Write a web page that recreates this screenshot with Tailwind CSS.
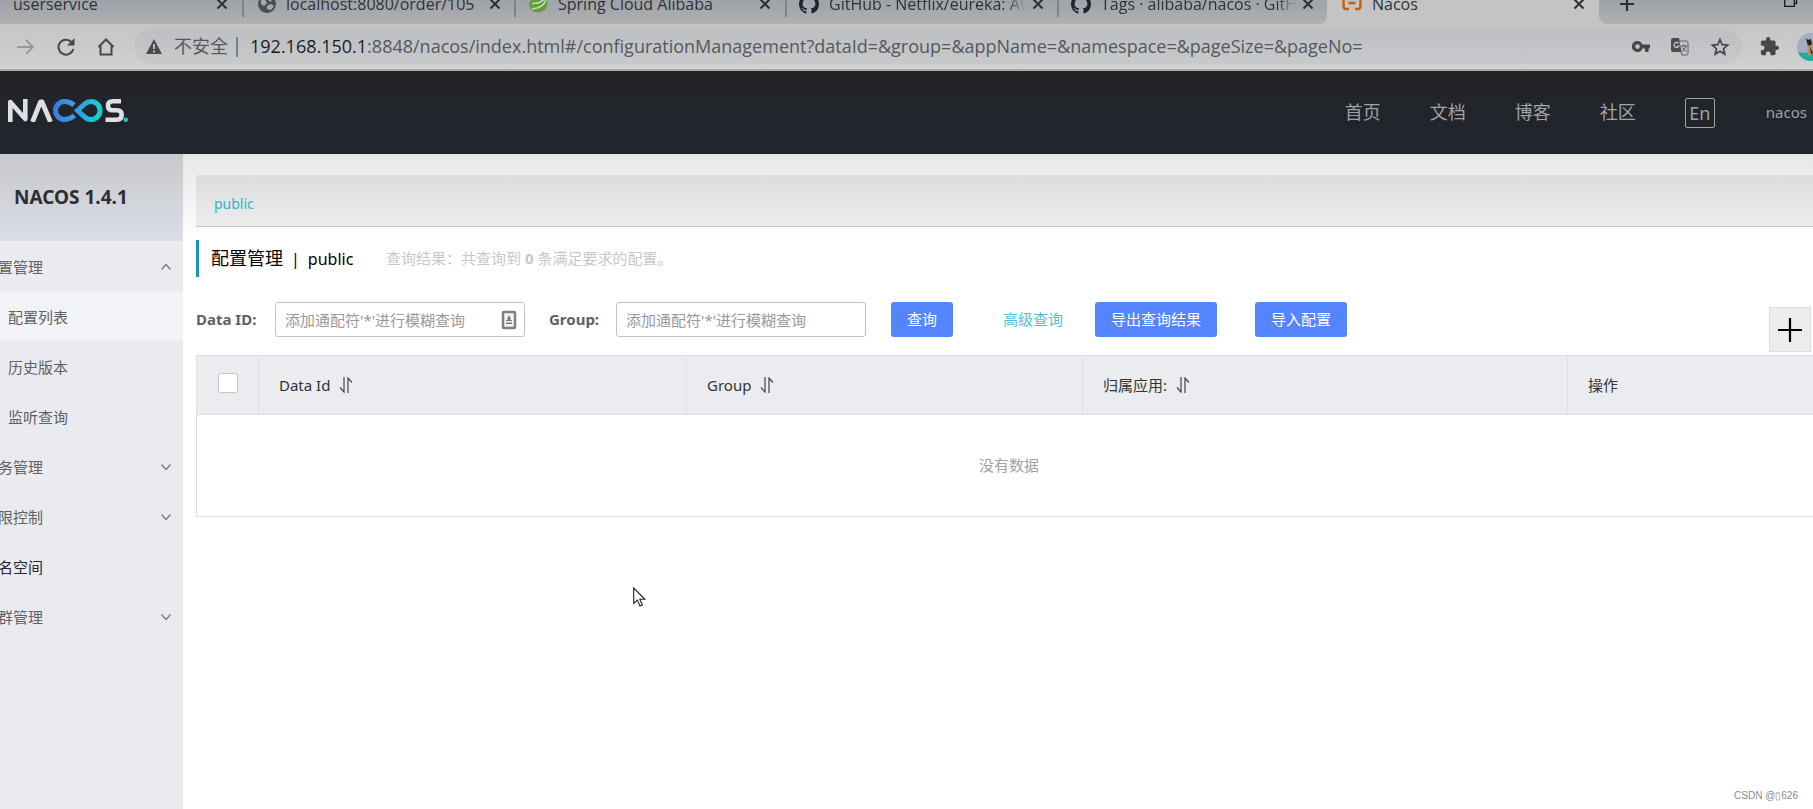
<!DOCTYPE html>
<html lang="zh-CN">
<head>
<meta charset="utf-8">
<title>Nacos</title>
<script src="https://cdn.jsdelivr.net/npm/@tailwindcss/browser@4"></script>
</head>
<body class="min-h-screen flex flex-col overflow-hidden bg-white text-[15px] font-['Noto_Sans','Noto_Sans_CJK_SC',sans-serif]">
<svg class="hidden">
  <symbol id="x" viewBox="0 0 12 12"><path d="M1.5 1.5l9 9M10.5 1.5l-9 9" stroke="#2d3033" stroke-width="2" fill="none"/></symbol>
  <symbol id="github" viewBox="0 0 16 16"><path fill="#1f2530" d="M8 0C3.58 0 0 3.58 0 8c0 3.54 2.29 6.53 5.47 7.59.4.07.55-.17.55-.38 0-.19-.01-.82-.01-1.49-2.01.37-2.53-.49-2.69-.94-.09-.23-.48-.94-.82-1.13-.28-.15-.68-.52-.01-.53.63-.01 1.08.58 1.23.82.72 1.21 1.87.87 2.33.66.07-.52.28-.87.51-1.07-1.78-.2-3.64-.89-3.64-3.95 0-.87.31-1.59.82-2.15-.08-.2-.36-1.02.08-2.12 0 0 .67-.21 2.2.82a7.6 7.6 0 0 1 4 0c1.53-1.04 2.2-.82 2.2-.82.44 1.1.16 1.92.08 2.12.51.56.82 1.27.82 2.15 0 3.07-1.87 3.75-3.65 3.95.29.25.54.73.54 1.48 0 1.07-.01 1.93-.01 2.2 0 .21.15.46.55.38A8.01 8.01 0 0 0 16 8c0-4.42-3.58-8-8-8z"/></symbol>
  <symbol id="sort" viewBox="0 0 14 16"><path d="M5 0v15L1 10.500M9 16V1l4 4.500" stroke="#444" stroke-width="1.200" fill="none"/></symbol>
  <symbol id="down" viewBox="0 0 12 8"><path d="M1.500 1.500l4.500 5 4.500-5" stroke="#777" stroke-width="1.200" fill="none"/></symbol>
</svg>

<!-- Browser tabs -->
<div class="h-6 shrink-0 flex bg-[#c4c4c3] text-[16px] text-[#2f3235] font-['Open_Sans',sans-serif]">
  <div class="h-6 shrink-0 overflow-hidden flex items-end rounded-br-lg bg-linear-to-b from-[#9ea3a7] to-[#aeb0b4]">
    <div class="h-10 w-[242px] shrink-0 flex items-center pl-[13px] pr-[14px]">
      <span class="flex-1">userservice</span>
      <button aria-label="关闭"><svg class="size-3"><use href="#x"/></svg></button>
    </div>
    <div class="h-10 w-[272px] shrink-0 flex items-center gap-[10px] pl-[14px] pr-[13px] border-l-2 border-[#7f8387] [border-image:linear-gradient(#7f8387_80%,transparent_80%)_1]">
      <svg class="size-[18px] shrink-0" viewBox="0 0 18 18"><circle cx="9" cy="9" r="9" fill="#4a4e52"/><path d="M3 4l4 1 2 3-3 3-3-2zM10 2l4 2-1 3-3-2zM9 11l4-2 3 2-3 4-4-1z" fill="#a6aaae"/></svg>
      <span class="flex-1 min-w-0 overflow-hidden whitespace-nowrap">localhost:8080/order/105</span>
      <button aria-label="关闭"><svg class="size-3"><use href="#x"/></svg></button>
    </div>
    <div class="h-10 w-[271px] shrink-0 flex items-center gap-[10px] pl-[12px] pr-[14px] border-l-2 border-[#7f8387] [border-image:linear-gradient(#7f8387_80%,transparent_80%)_1]">
      <svg class="size-5 shrink-0" viewBox="0 0 20 20"><path d="M18 1c2 7 2 12-2 15.500-4 3-10 2.500-13-1C-1 10 2 5 8 5c4 0 8-1 10-4z" fill="#5f9e35"/><path d="M18 5c-1 6-6 9-14 10M4 9.500C9 10 14 8 17 4" stroke="#c9d9bd" stroke-width="1.500" fill="none"/></svg>
      <span class="flex-1 min-w-0 overflow-hidden whitespace-nowrap">Spring Cloud Alibaba</span>
      <button aria-label="关闭"><svg class="size-3"><use href="#x"/></svg></button>
    </div>
    <div class="h-10 w-[272px] shrink-0 flex items-center gap-[10px] pl-[12px] pr-[13px] border-l-2 border-[#7f8387] [border-image:linear-gradient(#7f8387_80%,transparent_80%)_1]">
      <svg class="size-5 shrink-0"><use href="#github"/></svg>
      <span class="flex-1 min-w-0 -mr-1 overflow-hidden whitespace-nowrap mask-r-from-90%">GitHub - Netflix/eureka: AWS</span>
      <button aria-label="关闭"><svg class="size-3"><use href="#x"/></svg></button>
    </div>
    <div class="h-10 w-[270px] shrink-0 flex items-center gap-[10px] pl-[12px] pr-[13px] border-l-2 border-[#7f8387] [border-image:linear-gradient(#7f8387_80%,transparent_80%)_1]">
      <svg class="size-5 shrink-0"><use href="#github"/></svg>
      <span class="flex-1 min-w-0 -mr-1 overflow-hidden whitespace-nowrap mask-r-from-90%">Tags · alibaba/nacos · GitHub</span>
      <button aria-label="关闭"><svg class="size-3"><use href="#x"/></svg></button>
    </div>
  </div>
  <div class="h-6 w-[272px] shrink-0 overflow-hidden flex items-end">
    <div class="h-10 flex-1 flex items-center gap-[10px] pl-[15px] pr-[14px]">
      <svg class="size-5 shrink-0" viewBox="0 0 20 20"><path d="M7 3H4Q1.500 3 1.500 6v6q0 3 2.500 3h3M13 3h3q2.500 0 2.500 3v6q0 3-2.500 3h-3M6.500 9h7" stroke="#c8600f" stroke-width="2.400" fill="none"/></svg>
      <span class="flex-1">Nacos</span>
      <button aria-label="关闭"><svg class="size-3"><use href="#x"/></svg></button>
    </div>
  </div>
  <div class="h-6 flex-1 overflow-hidden flex items-end rounded-bl-lg bg-linear-to-b from-[#9ea3a7] to-[#aeb0b4]">
    <div class="h-10 flex-1 flex items-center justify-between pl-5 pr-[15px]">
      <button aria-label="新标签页"><svg class="size-4" viewBox="0 0 16 16"><path d="M8 1v14M1 8h14" stroke="#2d3033" stroke-width="2.200"/></svg></button>
      <button aria-label="还原"><svg class="w-[14px] h-5" viewBox="0 0 14 20"><path d="M.7 3h9.600v9.300H.7zM3 3V0h9.500v9.500H10" stroke="#17191b" stroke-width="1.300" fill="none"/></svg></button>
    </div>
  </div>
</div>

<!-- Address bar -->
<div class="h-[47px] shrink-0 flex items-center gap-[22px] pl-[17px] bg-linear-to-b from-[#c5c5c4] to-[#d0d1d1] border-b-2 border-[#a8acae]">
  <button aria-label="前进"><svg class="size-[18px]" viewBox="0 0 18 18"><path d="M0 9h16M9 2l7 7-7 7" stroke="#96989a" stroke-width="1.800" fill="none"/></svg></button>
  <button aria-label="刷新"><svg class="size-[18px]" viewBox="0 0 18 18"><path d="M14.500 4A7.500 7.500 0 1 0 16.300 11" stroke="#45484b" stroke-width="2" fill="none"/><path d="M17.500 0v7.500H10z" fill="#45484b"/></svg></button>
  <button aria-label="主页"><svg class="size-[18px]" viewBox="0 0 18 18"><path d="M1.500 9L9 1.500 16.500 9M3.500 8v8.500h11V8" stroke="#45484b" stroke-width="2" fill="none"/></svg></button>
  <div class="flex-1 h-[35px] -ml-[3px] rounded-full bg-linear-to-b from-[#bdbfc2] to-[#c8c9cb] flex items-center pl-3 pr-[12px] text-[18px] whitespace-nowrap text-[#55585c] font-['Open_Sans','Noto_Sans_CJK_SC',sans-serif]">
    <svg class="w-4 h-[15px] mr-3" viewBox="0 0 16 15"><path d="M8 0l8 15H0z" fill="#4a4c4f"/><path d="M8 5v5M8 11.500v2" stroke="#c4c5c7" stroke-width="1.800"/></svg>
    <span>不安全</span>
    <span class="w-[2px] h-5 bg-[#7d8083] ml-2 mr-3"></span>
    <span class="flex-1"><span class="text-[#1b1d1f]">192.168.150.1</span>:8848/nacos/index.html#/configurationManagement?dataId=&amp;group=&amp;appName=&amp;namespace=&amp;pageSize=&amp;pageNo=</span>
    <div class="flex items-center gap-[21px]">
      <button aria-label="密码"><svg class="w-[18px] h-3" viewBox="0 0 18 12"><path fill-rule="evenodd" d="M5.500 0a5.500 5.500 0 0 1 5 3.500H18v4h-1.500V11H13V7.500h-2.500A5.500 5.500 0 1 1 5.500 0zm0 3.300a2.300 2.300 0 1 0 0 4.600 2.300 2.300 0 0 0 0-4.600z" fill="#45484b"/></svg></button>
      <button aria-label="翻译"><svg class="size-[18px]" viewBox="0 0 18 18"><path d="M2 0h6l2.500 14H2q-2 0-2-2V2q0-2 2-2z" fill="#4b4e51"/><path d="M8.500 3h7q1.500 0 1.500 1.500v11q0 1.500-1.500 1.500H11l-1-3" stroke="#5b5e61" fill="none"/><path d="M7.700 5.300A2.600 2.600 0 1 0 8 8H5.500" stroke="#c5c6c8" stroke-width="1.200" fill="none"/><path d="M10 8h6M13 6.500V8M15 8q-1 4-4 5.500M11.500 9.500q1.500 3 4 4.500" stroke="#55585b" fill="none"/></svg></button>
      <button aria-label="收藏"><svg class="size-5" viewBox="0 0 20 20"><path d="M10 2.500l2.200 5.100 5.500.5-4.200 3.600 1.300 5.400L10 14.200l-4.800 2.900 1.300-5.400-4.200-3.600 5.500-.5z" stroke="#45484b" stroke-width="1.700" fill="none"/></svg></button>
    </div>
  </div>
  <button aria-label="扩展程序" class="-ml-1"><svg class="size-[19px]" viewBox="1 1 22 22"><path fill="#45484b" d="M20.500 11H19V7a2 2 0 0 0-2-2h-4V3.500a2.500 2.500 0 0 0-5 0V5H4a2 2 0 0 0-2 2v3.800h1.500a2.700 2.700 0 0 1 0 5.400H2V20a2 2 0 0 0 2 2h3.800v-1.500a2.700 2.700 0 0 1 5.400 0V22H17a2 2 0 0 0 2-2v-4h1.500a2.500 2.500 0 0 0 0-5z"/></svg></button>
  <button aria-label="账户" class="w-4 h-7 -ml-1 overflow-hidden"><svg class="size-7" viewBox="0 0 28 28"><clipPath id="c"><circle cx="14" cy="14" r="14"/></clipPath><g clip-path="url(#c)"><path fill="#a3adc4" d="M0 0h28v28H0z"/><path fill="#1fae9c" d="M0 19l8 1 20-2v10H0z"/><path fill="#a78f70" d="M10 9l5-1 3 13-7 2z"/><path fill="#29231f" d="M9 5l2 2 3-1 1 5-3 2-2-3zM13 14l3 6-2 1z"/></g></svg></button>
</div>

<!-- Site header -->
<header class="h-[83px] shrink-0 flex items-center justify-between pl-2 pr-[6px] bg-linear-to-b from-[#222426] to-[#21252e] text-[#a0a2a5]">
  <a href="#" aria-label="NACOS" class="mb-1"><svg class="w-[120px] h-[23px]" viewBox="0 0 120 23">
    <defs><linearGradient id="g1"><stop stop-color="#3b7be0"/><stop offset="1" stop-color="#3aa0dd"/></linearGradient><linearGradient id="g2"><stop stop-color="#2d9fe0"/><stop offset="1" stop-color="#16cfd6"/></linearGradient></defs>
    <path d="M2.300 23V3L17.300 20V0" stroke="#dedfe2" stroke-width="4.600" fill="none" stroke-linejoin="round"/>
    <path d="M24.500 23L32.500 3h1.500L42.500 23" stroke="#dedfe2" stroke-width="4.800" fill="none" stroke-linejoin="round"/>
    <path d="M66 6Q62 2.500 56.500 2.500a9 9 0 0 0 0 18Q62 20.500 66.500 16.500" stroke="url(#g1)" stroke-width="5" fill="none"/>
    <path d="M69.500 11.500L76.500 5.200q3-2.700 6.500-2.700a9 9 0 0 1 0 18q-4 0-6.500-2.700z" stroke="url(#g2)" stroke-width="5" fill="none"/>
    <path d="M113 2.300h-8q-5 0-5 4.500t5 4.500h4q4.700 0 4.700 4.700t-4.700 4.700H97.500" stroke="#dedfe2" stroke-width="4.600" fill="none"/>
    <circle cx="117.800" cy="20.800" r="2.200" fill="#16cfbf"/>
  </svg></a>
  <nav class="flex items-center gap-[49px] text-[18px]">
    <a href="#">首页</a>
    <a href="#">文档</a>
    <a href="#">博客</a>
    <a href="#">社区</a>
    <button class="size-[30px] mr-[2px] border border-[#a0a2a5] rounded-xs leading-7 text-center">En</button>
    <a href="#" class="text-[15px]">nacos</a>
  </nav>
</header>

<div class="flex-1 flex">
  <!-- Sidebar -->
  <aside class="w-[183px] shrink-0 overflow-hidden bg-[#eaebf0] text-[#5f6166]">
    <h1 class="h-[87px] flex items-center pl-[14px] font-bold text-[19px] text-[#2c2e31] bg-linear-to-b from-[#c7c9ce] to-[#dadde4]">NACOS 1.4.1</h1>
    <ul class="-ml-[17px] leading-[48px]">
      <li><a href="#" class="flex items-center justify-between pt-[2px] pr-[11px]">配置管理<svg class="w-3 h-2 rotate-180"><use href="#down"/></svg></a>
        <ul>
          <li><a href="#" class="block pt-[2px] pl-[25px] bg-[#f2f3f7]">配置列表</a></li>
          <li><a href="#" class="block pt-[2px] pl-[25px]">历史版本</a></li>
          <li><a href="#" class="block pt-[2px] pl-[25px]">监听查询</a></li>
        </ul>
      </li>
      <li><a href="#" class="flex items-center justify-between pt-[2px] pr-[11px]">服务管理<svg class="w-3 h-2"><use href="#down"/></svg></a></li>
      <li><a href="#" class="flex items-center justify-between pt-[2px] pr-[11px]">权限控制<svg class="w-3 h-2"><use href="#down"/></svg></a></li>
      <li><a href="#" class="block pt-[2px] text-[#26282b]">命名空间</a></li>
      <li><a href="#" class="flex items-center justify-between pt-[2px] pr-[11px]">集群管理<svg class="w-3 h-2"><use href="#down"/></svg></a></li>
    </ul>
  </aside>

  <!-- Content -->
  <main class="flex-1 min-w-0 flex flex-col pl-[13px] pt-[21px] bg-linear-to-b from-[#e6e7e7] to-white to-[90px]">
    <div class="h-[52px] flex items-center pt-[6px] pl-[18px] bg-linear-to-b from-[#dcdcdc] to-[#ececec] border-b border-[#c4c4c4]">
      <a href="#" class="text-[14px] text-[#2ab5c9]">public</a>
    </div>
    <div class="mt-[13px] h-[37px] flex items-center border-l-3 border-[#1797b8] pl-[12px]">
      <h2 class="text-[18px] text-black flex items-center gap-2 w-[175px]"><span>配置管理</span><span class="text-[16px]">|</span><span class="text-[16px]">public</span></h2>
      <p class="text-[#c8c8c8]">查询结果：共查询到 <strong>0</strong> 条满足要求的配置。</p>
    </div>

    <form class="mt-[25px] h-[35px] flex items-center text-[#5f6164]">
      <label for="dataId" class="font-bold w-[79px]">Data ID:</label>
      <div class="relative w-[250px]">
        <input id="dataId" class="block w-full h-[35px] border border-[#c0c2c6] rounded-[3px] pl-[9px] pr-9 bg-white placeholder:text-[#999]" placeholder="添加通配符'*'进行模糊查询">
        <svg class="absolute right-2 top-2 w-4 h-5" viewBox="0 0 16 20"><rect x="2" y="2" width="12" height="16" rx="1" fill="#f2f2f2" stroke="#808080" stroke-width="2.500"/><path d="M8 5l1.500 3v2h1.500v1H5v-1h1.500V8zM5 12.500h6V14H5z" fill="#777"/></svg>
      </div>
      <label for="group" class="font-bold ml-6 w-[67px]">Group:</label>
      <input id="group" class="w-[250px] h-[35px] border border-[#c0c2c6] rounded-[3px] px-[9px] bg-white placeholder:text-[#999]" placeholder="添加通配符'*'进行模糊查询">
      <button type="button" class="ml-[25px] h-[35px] px-4 rounded-[3px] bg-[#5584ff] text-white">查询</button>
      <a href="#" class="ml-[50px] text-[#4cc3d3]">高级查询</a>
      <button type="button" class="ml-8 h-[35px] px-4 rounded-[3px] bg-[#5584ff] text-white">导出查询结果</button>
      <button type="button" class="ml-[38px] h-[35px] px-4 rounded-[3px] bg-[#5584ff] text-white">导入配置</button>
      <button type="button" aria-label="新建配置" class="ml-auto mr-[2px] mt-5 w-[42px] h-[45px] flex items-center justify-center bg-[#ececec] border border-[#ddd]"><svg class="size-[26px]" viewBox="0 0 26 26"><path d="M13 1v24M1 13h24" stroke="#000" stroke-width="2.200"/></svg></button>
    </form>

    <table class="mt-[18px] w-full table-fixed border border-r-0 border-[#dcdee3] text-left text-[#333]">
      <thead>
        <tr class="h-[59px] bg-[#ebecf0]">
          <th class="w-[62px] border border-[#dcdee3]"><input type="checkbox" aria-label="全选" class="block mx-auto mb-1 appearance-none size-5 rounded-[3px] border border-[#c4c6cf] bg-white"></th>
          <th class="w-[428px] pl-5 border border-[#dcdee3] font-normal"><span class="flex items-center gap-[9px]">Data Id <svg class="w-[14px] h-4"><use href="#sort"/></svg></span></th>
          <th class="w-[396px] pl-5 border border-[#dcdee3] font-normal"><span class="flex items-center gap-[9px]">Group <svg class="w-[14px] h-4"><use href="#sort"/></svg></span></th>
          <th class="w-[30%] pl-5 border border-[#dcdee3] font-normal"><span class="flex items-center gap-[9px]">归属应用: <svg class="w-[14px] h-4"><use href="#sort"/></svg></span></th>
          <th class="pl-5 border border-r-0 border-[#dcdee3] font-normal">操作</th>
        </tr>
      </thead>
      <tbody>
        <tr class="h-[102px] bg-white"><td colspan="5" class="pl-2 text-center text-[#a0a2a8]">没有数据</td></tr>
      </tbody>
    </table>
    <footer class="mt-auto self-end pr-[15px] pb-[6px] text-[10px] text-[#8a8a8a] font-['Liberation_Sans',sans-serif]">CSDN @▯626</footer>
  </main>
</div>

<svg class="absolute left-[633px] top-[587px] w-[13px] h-5" viewBox="0 0 13 20"><path d="M.7 1v15.500l3.600-3.400 2.700 6 2.400-1.100-2.600-5.700H12z" fill="#fff" stroke="#222" stroke-width="1.100"/></svg>
</body>
</html>
